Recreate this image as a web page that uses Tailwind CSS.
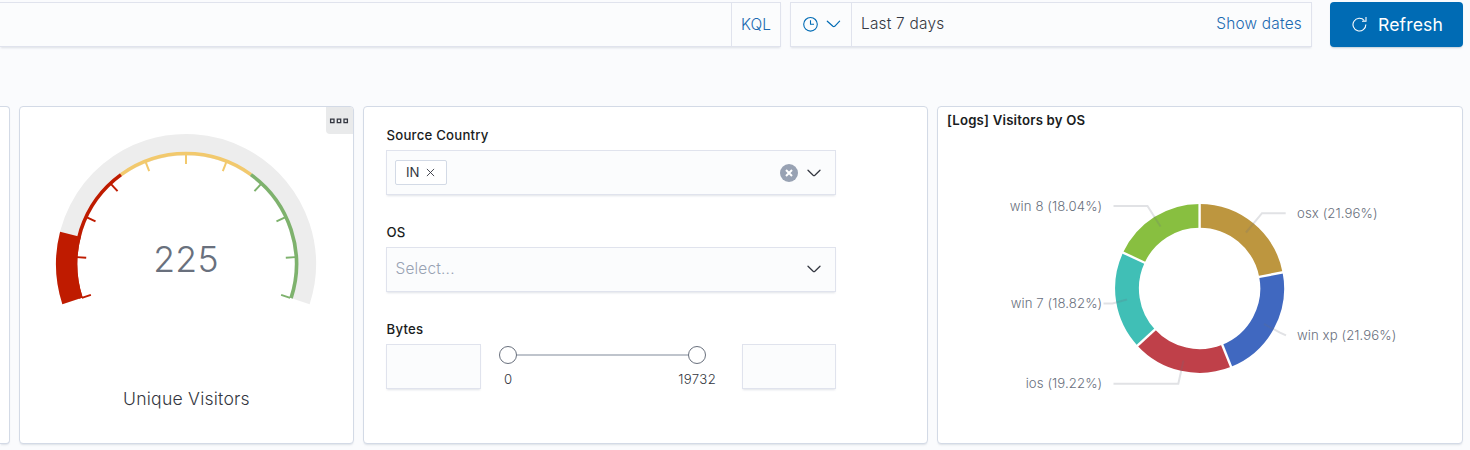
<!DOCTYPE html>
<html lang="en">
<head>
<meta charset="utf-8">
<title>Logs dashboard</title>
<script src="https://cdn.jsdelivr.net/npm/@tailwindcss/browser@4"></script>
</head>
<body class="h-[450px] w-[1470px] overflow-hidden bg-[#fafbfd] font-['Inter',sans-serif] font-[350] text-[#343741]">
<header class="flex h-[47px] pt-[2px]">
  <div class="flex h-[45px] w-[781px] border border-l-0 border-[#e0e3ed] bg-[#fbfcfd] shadow-[0_2px_2px_-1px_rgba(152,162,179,0.3)]">
    <div class="flex-1"></div>
    <div class="flex w-[49px] items-center justify-center border-l border-[#e0e3ed] text-[15.4px] text-[#1a69b0]">KQL</div>
  </div>
  <div class="ml-[9px] flex h-[45px] w-[522px] border border-[#e0e3ed] bg-[#fbfcfd] shadow-[0_2px_2px_-1px_rgba(152,162,179,0.3)]">
    <div class="flex w-[61px] items-center border-r border-[#e0e3ed] pl-3 text-[#006bb4]">
      <svg class="mb-px size-4" viewBox="0 0 16 16" fill="none" stroke="currentColor" stroke-width="1.1"><circle cx="7.5" cy="8.3" r="6.8"/><path d="M7.5 4.3v4h3.5"/></svg>
      <svg class="mb-px ml-[7px] h-4 w-4" viewBox="0 0 16 16" fill="none" stroke="currentColor" stroke-width="1.2" stroke-linecap="round"><path d="M1.3 5.2 6.9 10.3q.9.7 1.8 0L13.6 5.2"/></svg>
    </div>
    <div class="flex flex-1 items-center justify-between pr-[9px] pl-[9px] pb-[2px] text-[15.4px] tracking-[0.22px]"><span>Last 7 days</span><span class="text-[#1a69b0]">Show dates</span></div>
  </div>
  <button class="ml-[18px] flex h-[45px] w-[133px] items-center rounded-[4px] bg-[#006bb4] pl-[22px] text-[17.6px] font-normal tracking-[0.12px] text-white shadow-[0_2px_2px_-1px_rgba(54,97,126,0.3)]">
    <svg class="mb-px h-4 w-4" viewBox="0 0 16 16" fill="none" stroke="currentColor" stroke-width="1.1"><path d="M13.8 8.4A6.4 6.4 0 1 1 12.3 4.5M14 1v4.2h-4"/></svg>
    <span class="mt-px ml-[10px]">Refresh</span>
  </button>
</header>

<main class="mt-[59px] flex h-[338px] gap-[9px]">
  <section class="w-[10px] rounded-r-[4px] border border-l-0 border-[#d3dae6] bg-white shadow-[0_2px_2px_-1px_rgba(152,162,179,0.3)]"></section>

  <section class="relative w-[335px] rounded-[4px] border border-[#d3dae6] bg-white shadow-[0_2px_2px_-1px_rgba(152,162,179,0.3)]">
    <svg class="h-[336px] w-[333px]" viewBox="20 107 333 336" fill="none">
      <circle cx="186" cy="264" r="119.3" stroke="#ededed" stroke-width="21.4" pathLength="360" stroke-dasharray="216 360" transform="rotate(162 186 264)"/>
      <circle cx="186" cy="264" r="110.5" stroke="#bf1b00" stroke-width="3.6" pathLength="360" stroke-dasharray="72 360" transform="rotate(162 186 264)"/>
      <circle cx="186" cy="264" r="119.3" stroke="#bf1b00" stroke-width="21.4" pathLength="360" stroke-dasharray="32.4 360" transform="rotate(162 186 264)"/>
      <circle cx="186" cy="264" r="110.5" stroke="#f2c96d" stroke-width="3.6" pathLength="360" stroke-dasharray="72 360" transform="rotate(234 186 264)"/>
      <circle cx="186" cy="264" r="110.5" stroke="#7eb26d" stroke-width="3.6" pathLength="360" stroke-dasharray="72 360" transform="rotate(306 186 264)"/>
      <g stroke="#bf1b00" stroke-width="2">
        <path d="M286 264h9.5" transform="rotate(162 186 264)"/>
        <path d="M286 264h9.5" transform="rotate(183.6 186 264)"/>
        <path d="M286 264h9.5" transform="rotate(205.2 186 264)"/>
        <path d="M286 264h9.5" transform="rotate(226.8 186 264)"/>
      </g>
      <g stroke="#f2c96d" stroke-width="2">
        <path d="M286 264h9.5" transform="rotate(248.4 186 264)"/>
        <path d="M286 264h9.5" transform="rotate(270 186 264)"/>
        <path d="M286 264h9.5" transform="rotate(291.6 186 264)"/>
      </g>
      <g stroke="#7eb26d" stroke-width="2">
        <path d="M286 264h9.5" transform="rotate(313.2 186 264)"/>
        <path d="M286 264h9.5" transform="rotate(334.8 186 264)"/>
        <path d="M286 264h9.5" transform="rotate(356.4 186 264)"/>
        <path d="M286 264h9.5" transform="rotate(378 186 264)"/>
      </g>
      <text x="186" y="272" text-anchor="middle" class="fill-[#69707d] text-[35.6px] tracking-[0.3px]">225</text>
      <text x="186.5" y="405" text-anchor="middle" class="fill-[#343741] text-[17.6px] tracking-[0.22px]">Unique Visitors</text>
    </svg>
    <div class="absolute top-0 right-0 flex h-[27px] w-[27px] items-center justify-center rounded-tr-[3px] rounded-bl-[4px] bg-[#e9eaeb]">
      <svg class="mr-[2px] h-[6px] w-[20px]" viewBox="0 0 20 6" fill="none" stroke="#343741" stroke-width="1.3"><path d="M1.6 1.1h3.4v3.6h-3.4zM8.3 1.1h3.4v3.6h-3.4zM15 1.1h3.4v3.6h-3.4z"/></svg>
    </div>
  </section>

  <section class="w-[565px] rounded-[4px] border border-[#d3dae6] bg-white pt-[19px] pl-[22px] text-[13.2px] shadow-[0_2px_2px_-1px_rgba(152,162,179,0.3)]">
    <div class="w-[450px]">
      <div class="h-[24px] pl-[0.5px] leading-[18px] font-medium tracking-[0.22px] text-[#1a1c21]">Source Country</div>
      <div class="flex h-[45px] items-center border border-[#e0e3ed] bg-[#fbfcfd] pr-[13px] pl-2 shadow-[0_2px_2px_-1px_rgba(152,162,179,0.3)]">
        <div class="mb-px flex h-[25px] w-[52px] items-center rounded-[2px] border border-[#d3dae6] bg-white pl-[10px]"><span class="mt-px font-normal">IN</span>
          <svg class="mt-px ml-[7px] size-[9px]" viewBox="0 0 10 10" fill="none" stroke="#343741" stroke-width="1"><path d="m1 1 8 8M9 1 1 9"/></svg>
        </div>
        <svg class="ml-auto size-[18px]" viewBox="0 0 18 18"><circle cx="9" cy="9" r="9" fill="#98a2b3"/><path d="m6 6 6 6M12 6l-6 6" stroke="#fff" stroke-width="2"/></svg>
        <svg class="ml-2 size-4" viewBox="0 0 16 16" fill="none" stroke="#343741" stroke-width="1.3" stroke-linecap="round"><path d="M2 5.2 7.1 10.3q.9.7 1.8 0L14 5.2"/></svg>
      </div>
      <div class="mt-[28px] h-[24px] pl-[0.5px] leading-[18px] font-medium tracking-[0.22px] text-[#1a1c21]">OS</div>
      <div class="flex h-[45px] items-center justify-between border border-[#e0e3ed] bg-[#fbfcfd] pr-[13px] pl-2 shadow-[0_2px_2px_-1px_rgba(152,162,179,0.3)]">
        <span class="mb-[2px] pl-[0.5px] text-[15.4px] tracking-[0.2px] text-[#98a2b3]">Select...</span>
        <svg class="mb-[2px] size-4" viewBox="0 0 16 16" fill="none" stroke="#343741" stroke-width="1.3" stroke-linecap="round"><path d="M2 5.2 7.1 10.3q.9.7 1.8 0L14 5.2"/></svg>
      </div>
      <div class="mt-[28px] h-[24px] pl-[0.5px] leading-[18px] font-medium tracking-[0.22px] text-[#1a1c21]">Bytes</div>
      <div class="flex">
        <div class="h-[45px] w-[95px] border border-[#e0e3ed] bg-[#fbfcfd] shadow-[0_2px_2px_-1px_rgba(152,162,179,0.3)]"></div>
        <svg class="h-[45px] w-[261px]" viewBox="481 344 261 45">
          <path d="M508 355h189" stroke="#bfc4cc" stroke-width="2"/>
          <circle cx="508" cy="355" r="8.5" fill="#fff" stroke="#69707d"/>
          <circle cx="697" cy="355" r="8.5" fill="#fff" stroke="#69707d"/>
          <text x="508" y="384" text-anchor="middle" class="fill-[#343741] text-[13.2px]">0</text>
          <text x="697.2" y="384" text-anchor="middle" class="fill-[#343741] text-[13.2px] tracking-[0.35px]">19732</text>
        </svg>
        <div class="h-[45px] w-[94px] border border-[#e0e3ed] bg-[#fbfcfd] shadow-[0_2px_2px_-1px_rgba(152,162,179,0.3)]"></div>
      </div>
    </div>
  </section>

  <section class="w-[526px] rounded-[4px] border border-[#d3dae6] bg-white shadow-[0_2px_2px_-1px_rgba(152,162,179,0.3)]">
    <h2 class="h-[26px] pl-[9px] text-[13.2px] leading-[26px] font-semibold tracking-[0.2px] text-[#1a1c21]">[Logs] Visitors by OS</h2>
    <svg class="h-[310px] w-[524px]" viewBox="938 133 524 310" fill="none">
      <g stroke-width="23.8">
        <circle cx="1199.6" cy="288.4" r="72.6" stroke="#bd963f" pathLength="360" stroke-dasharray="79.06 360" transform="rotate(-90 1199.6 288.4)"/>
        <circle cx="1199.6" cy="288.4" r="72.6" stroke="#4068c0" pathLength="360" stroke-dasharray="79.06 360" transform="rotate(-10.94 1199.6 288.4)"/>
        <circle cx="1199.6" cy="288.4" r="72.6" stroke="#bf4049" pathLength="360" stroke-dasharray="69.19 360" transform="rotate(68.12 1199.6 288.4)"/>
        <circle cx="1199.6" cy="288.4" r="72.6" stroke="#40bfb6" pathLength="360" stroke-dasharray="67.75 360" transform="rotate(137.31 1199.6 288.4)"/>
        <circle cx="1199.6" cy="288.4" r="72.6" stroke="#88bf40" pathLength="360" stroke-dasharray="64.94 360" transform="rotate(205.06 1199.6 288.4)"/>
      </g>
      <g stroke="#fff" stroke-width="2.4">
        <path d="M1259 288.4h27" transform="rotate(-90 1199.6 288.4)"/>
        <path d="M1259 288.4h27" transform="rotate(-10.94 1199.6 288.4)"/>
        <path d="M1259 288.4h27" transform="rotate(68.12 1199.6 288.4)"/>
        <path d="M1259 288.4h27" transform="rotate(137.31 1199.6 288.4)"/>
        <path d="M1259 288.4h27" transform="rotate(205.06 1199.6 288.4)"/>
      </g>
      <g stroke="#69707d" stroke-opacity=".2" stroke-width="2">
        <path d="M1113.5 206h34l13 20.5"/>
        <path d="M1103.5 303.4h9l14.5-3.9"/>
        <path d="M1113.5 383.7h64.8l5.2-23.2"/>
        <path d="M1285.7 213.2H1262l-16 19.3"/>
        <path d="M1286 335.3 1280 332.6 1264 324"/>
      </g>
      <g class="fill-[#69707d] text-[13.2px] tracking-[0.08px]">
        <text x="1102.3" y="211" text-anchor="end">win 8 (18.04%)</text>
        <text x="1102.3" y="308" text-anchor="end">win 7 (18.82%)</text>
        <text x="1102.3" y="388" text-anchor="end">ios (19.22%)</text>
        <text x="1297" y="218">osx (21.96%)</text>
        <text x="1297" y="340">win xp (21.96%)</text>
      </g>
    </svg>
  </section>
</main>
</body>
</html>
